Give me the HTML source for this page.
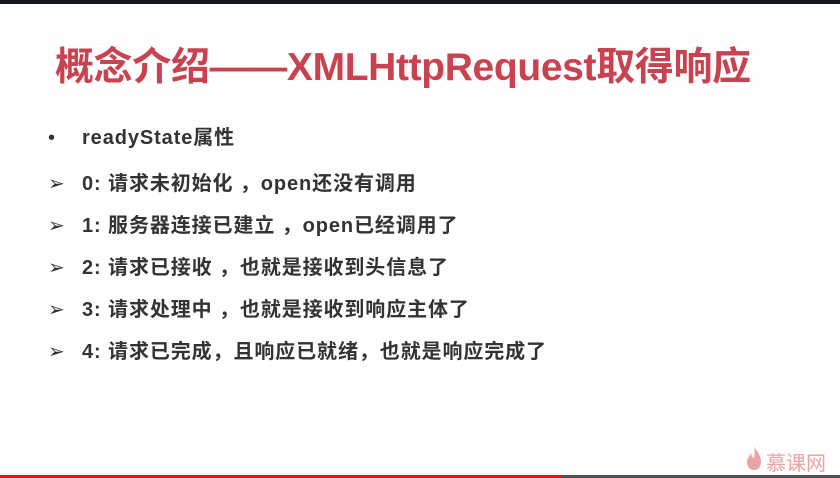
<!DOCTYPE html>
<html><head><meta charset="utf-8"><style>
body{margin:0;width:840px;height:478px;background:#fefefe;position:relative;overflow:hidden;font-family:"Liberation Sans","Noto Sans CJK SC",sans-serif}
.top{position:absolute;left:0;top:0;width:840px;height:4px;background:#15191d}
.title{position:absolute;left:55px;top:36px;font-size:39px;font-weight:bold;color:#c9424f;white-space:nowrap;letter-spacing:-0.35px}
.l{position:absolute;left:82px;font-size:20px;font-weight:bold;color:#333;white-space:nowrap;line-height:24px;letter-spacing:0.9px}
.m{position:absolute;left:48px;font-size:20px;color:#333;line-height:24px}
.bl{position:absolute;left:0;top:475px;width:562px;height:3px;background:#e8130a}
.bg{position:absolute;left:562px;top:475px;width:278px;height:3px;background:#4a5256}
.logo{position:absolute;left:766px;top:447px;font-size:20px;color:#eba3a6;white-space:nowrap}
</style></head><body>
<div class="top"></div>
<div class="title">概念介绍——XMLHttpRequest取得响应</div>
<div class="m" style="top:126px;">•</div><div class="l" style="top:126px">readyState属性</div>
<div class="m" style="top:172px">➢</div><div class="l" style="top:172px">0: 请求未初始化 ，open还没有调用</div>
<div class="m" style="top:214px">➢</div><div class="l" style="top:214px">1: 服务器连接已建立 ，open已经调用了</div>
<div class="m" style="top:256px">➢</div><div class="l" style="top:256px">2: 请求已接收 ，也就是接收到头信息了</div>
<div class="m" style="top:298px">➢</div><div class="l" style="top:298px">3: 请求处理中 ，也就是接收到响应主体了</div>
<div class="m" style="top:340px">➢</div><div class="l" style="top:340px">4: 请求已完成，且响应已就绪，也就是响应完成了</div>
<svg style="position:absolute;left:746px;top:445px" width="16" height="26" viewBox="0 0 16 26"><path d="M8 1C10 6 15 10 15 17C15 22 12 25 8 25C4 25 1 22 1 17C1 13 4 11 5 8C6 12 7 13 8 13C9 9 9 5 8 1Z" fill="#eba3a6"/></svg>
<div class="logo">慕课网</div>
<div class="bl"></div><div class="bg"></div>
</body></html>
